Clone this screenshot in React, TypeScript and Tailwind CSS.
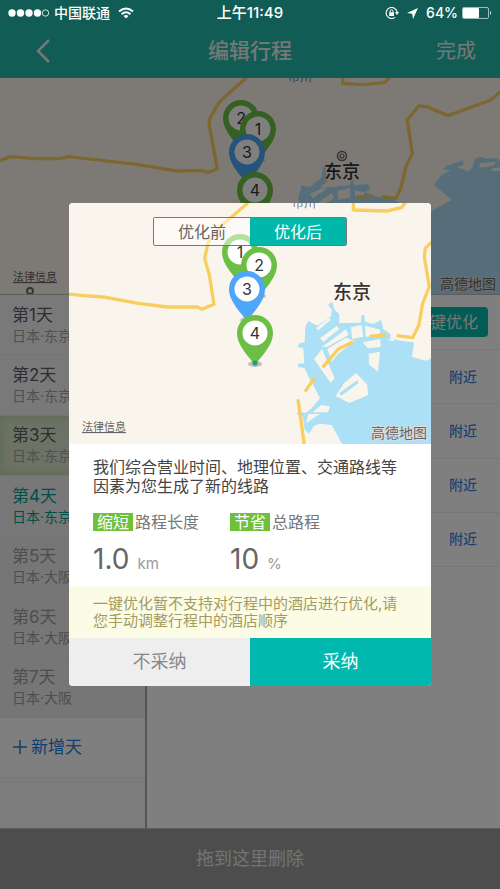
import React from "react";

type Tone = "normal" | "active" | "selected" | "muted";

const days: { name: string; place: string; tone: Tone }[] = [
  { name: "第1天", place: "日本·东京", tone: "normal" },
  { name: "第2天", place: "日本·东京", tone: "normal" },
  { name: "第3天", place: "日本·东京", tone: "active" },
  { name: "第4天", place: "日本·东京", tone: "selected" },
  { name: "第5天", place: "日本·大阪", tone: "muted" },
  { name: "第6天", place: "日本·大阪", tone: "muted" },
  { name: "第7天", place: "日本·大阪", tone: "muted" },
];

const rowTone: Record<Tone, string> = {
  normal: "bg-[#f3f3f3] text-[#5c5c5c]",
  active: "bg-[#d9e6cc] text-[#5c5c5c] shadow-[inset_0_0_12px_#b6d39a]",
  selected: "bg-[#f0f0f0] text-[#00a090]",
  muted: "bg-[#ececec] text-[#9c9c9c]",
};

const placeTone: Record<Tone, string> = {
  normal: "text-[#a0a0a0]",
  active: "text-[#a0a0a0]",
  selected: "text-[#00a090]",
  muted: "text-[#9c9c9c]",
};

function Pin({ x, y, n, color = "#6cbf45" }: { x: number; y: number; n: number; color?: string }) {
  return (
    <g transform={`translate(${x} ${y})`}>
      <ellipse cx="0" cy="31" rx="7" ry="3" fill="#8d8580" opacity="0.5" />
      <path d="M0 33 C-3 26 -18 14 -18 0 A18 18 0 0 1 18 0 C18 14 3 26 0 33Z" fill={color} />
      <circle r="12.5" fill="#fff" />
      <text y="6" textAnchor="middle" fontSize="16" fill="#333">
        {n}
      </text>
    </g>
  );
}

function MapBrand({ x, y }: { x: number; y: number }) {
  return (
    <text x={x} y={y} fontSize="14" fill="#666" stroke="#ddd" strokeWidth="2" paintOrder="stroke">
      高德地图
    </text>
  );
}

function TripMap() {
  return (
    <svg viewBox="0 0 500 216" preserveAspectRatio="xMidYMin slice" className="block h-[216px] w-full bg-[#faf5ec]">
      <g transform="translate(250 -8) scale(.3333)">
        <path
          fill="#abdcf2"
          d="M145 385 155 345 180 352 215 322 218 288 228 296 232 335 210 352 245 352 270 348 300 346 302 328 310 330 312 345 355 343 360 362 345 365 380 380 430 388 450 400 150 405ZM552 345 575 315 602 300 578 300 590 288 640 270 640 285 622 292 655 305 668 290 675 266 690 260 710 266 740 264 750 272V672H500V450L540 425 605 390Z"
        />
        <path
          fill="#faf5ec"
          d="M180 372 225 350 228 358 188 385ZM205 398 245 368 252 385 225 402ZM262 362 300 355 302 382 265 390ZM315 360 345 368 338 380 315 378ZM690 280 735 275 735 284 705 292 688 292ZM722 296 750 292V302L728 304Z"
        />
        <g fill="none" stroke="#f8cf61" strokeWidth="10" strokeLinejoin="round">
          <path d="M278 20V40L340 44 405 38 418 22" />
          <path d="M752 65 722 90 595 137 530 110 506 108 472 150 487 250 468 290 452 355 438 385 395 380M322 381 368 379" />
          <path d="M-750 272-720 260-645 266-570 266-545 260-340 283-220 303-145 301-128 308-98 297-123 160-120 145-93 97-10 22" />
        </g>
      </g>
      <g fill="none" stroke="#666">
        <circle cx="342" cy="78" r="4.5" strokeWidth="1.5" />
        <circle cx="342" cy="78" r="2" strokeWidth="1.2" />
        <circle cx="30" cy="213" r="3" strokeWidth="1.8" />
      </g>
      <text x="288" y="4" fontSize="12" fill="#777">市川</text>
      <text x="324" y="100" fontSize="18" fontWeight="500" fill="#333" stroke="#faf5ec" strokeWidth="2" paintOrder="stroke">东京</text>
      <Pin x={241} y={40} n={2} />
      <Pin x={258} y={51} n={1} />
      <Pin x={247} y={74} n={3} color="#4da6f5" />
      <Pin x={255} y={112} n={4} />
      <MapBrand x={440} y={211} />
      <text x="13" y="203" fontSize="11" fill="#666" textDecoration="underline">法律信息</text>
    </svg>
  );
}

function ResultMap() {
  return (
    <svg viewBox="0 0 362 241" preserveAspectRatio="xMidYMin slice" className="block h-[241px] w-full bg-[#faf5ec]">
      <g transform="translate(171 -8) scale(.3333)">
        <path
          fill="#abe0f6"
          d="M308 750 275 690 240 686 222 692 208 716 194 704 188 664 170 656 176 648 196 655 215 640 240 610 225 580 208 550 193 519 174 516V507L193 505 190 460 173 456 178 445 194 442 196 395 205 378 232 392 272 365 276 344 264 330 276 320 284 344 298 358 298 384 362 383 365 360 373 360 375 380 400 387 423 375 430 402 452 418 450 430 485 438 522 442 516 486 560 497 576 488V750Z"
        />
        <path
          fill="#faf5ec"
          d="M228 400 268 368 272 375 235 406ZM240 430 290 393 298 402 250 440ZM245 457 318 403 326 420 262 455ZM222 492 246 463 284 550 272 564ZM262 462 318 428 345 438 296 475 275 500ZM333 396 365 390 370 425 336 432ZM375 392 422 405 415 424 377 425ZM368 442 421 432 422 456 384 460ZM386 476 420 470 414 530 387 508ZM287 603 312 565 348 534 381 568 385 600 328 624ZM217 652 244 630 270 634 264 652ZM205 657 240 656 198 685ZM440 434 460 430 464 439Z"
        />
        <path d="M298 594 352 556 356 564 304 602Z" fill="#abe0f6" />
        <g fill="none" stroke="#f8ce60" strokeWidth="10" strokeLinejoin="round">
          <path d="M340 22V45L440 48 485 38 496 22" />
          <path d="M576 140 556 160 553 185 568 275 548 325 537 390 518 428 470 422M438 420 388 424M340 440 295 462 248 517M225 547 195 590M174 613 193 750" />
          <path d="M-515 297-470 302-410 306-305 325-218 336-128 336-114 343-78 328-92 240-106 190-95 140-60 95 24 24" />
        </g>
      </g>
      <text x="223" y="5" fontSize="12" fill="#777">市川</text>
      <text x="264" y="96" fontSize="19" fontWeight="500" fill="#333" stroke="#faf5ec" strokeWidth="2" paintOrder="stroke">东京</text>
      <Pin x={171} y={49} n={1} />
      <Pin x={190} y={62} n={2} />
      <Pin x={178} y={86} n={3} color="#4da6f8" />
      <Pin x={186} y={130} n={4} />
      <circle cx="186" cy="160" r="2.5" fill="#159c8c" />
      <MapBrand x={302} y={235} />
      <text x="13" y="228" fontSize="11" fill="#666" textDecoration="underline">法律信息</text>
    </svg>
  );
}

function StatusBar() {
  return (
    <div className="absolute inset-x-0 top-0 z-20 grid h-[26px] grid-cols-3 items-center px-2 text-sm font-medium text-white">
      <div className="flex items-center gap-1 whitespace-nowrap">
        <svg width="42" height="10" viewBox="0 0 42 10" fill="#fff">
          <circle cx="4" cy="5" r="3.7" />
          <circle cx="12.5" cy="5" r="3.7" />
          <circle cx="21" cy="5" r="3.7" />
          <circle cx="29.5" cy="5" r="3.7" />
          <circle cx="37.5" cy="5" r="3.2" fill="none" stroke="#fff" strokeWidth="0.8" />
        </svg>
        <span>中国联通</span>
        <svg className="ml-1" width="16" height="12" viewBox="0 0 16 12" fill="none" stroke="#fff" strokeWidth="2">
          <path d="M1 4.5Q8-1.5 15 4.5M3.5 7.2Q8 3.2 12.5 7.2" />
          <path d="M5.5 9Q8 7 10.5 9L8 11.5Z" fill="#fff" stroke="none" />
        </svg>
      </div>
      <div className="text-center text-[15px]">上午11:49</div>
      <div className="flex items-center justify-end gap-1">
        <svg width="14" height="12" viewBox="0 0 14 12" fill="none" stroke="#fff">
          <path d="M12.1 5A5.5 5.5 0 1 0 10 10.4" strokeWidth="1.1" />
          <path d="M10 5H14L12 8Z" fill="#fff" stroke="none" />
          <path d="M4.2 5.3H9V9H4.2Z" fill="#fff" stroke="none" />
          <path d="M5.2 5.5V4.2A1.4 1.4 0 0 1 8 4.2V5.5" />
        </svg>
        <svg className="mx-1" width="11" height="11" viewBox="0 0 11 11" fill="#fff">
          <path d="M11 0 6 11 5.2 5.8 0 5Z" />
        </svg>
        <span>64%</span>
        <svg width="30" height="12" viewBox="0 0 30 12">
          <rect x="0.5" y="0.5" width="26" height="11" rx="1.5" fill="none" stroke="#fff" strokeOpacity="0.6" />
          <rect x="1" y="1" width="16" height="10" rx="1" fill="#fff" />
          <path d="M28 4Q30 6 28 8Z" fill="#fff" />
        </svg>
      </div>
    </div>
  );
}

function Result({ tag, label, value, unit }: { tag: string; label: string; value: string; unit: string }) {
  return (
    <div className="w-[137px]">
      <div className="flex items-center gap-[2px] leading-[18px] text-[#777]">
        <span className="bg-[#6fc13c] px-1 text-white">{tag}</span>
        <span>{label}</span>
      </div>
      <div className="mt-[10px] flex items-baseline gap-2 leading-9">
        <span className="text-[28px] text-[#666]">{value}</span>
        <span className="text-[15px] text-[#999]">{unit}</span>
      </div>
    </div>
  );
}

export default function App() {
  return (
    <div className="relative flex min-h-screen flex-col bg-white font-['Inter','Noto_Sans_CJK_SC',sans-serif]">
      <StatusBar />
      <header className="grid h-[78px] grid-cols-3 items-center bg-[#22baac] px-6 pt-6 text-xl text-[#eee]">
        <button type="button" aria-label="返回" className="justify-self-start px-3">
          <svg width="14" height="24" viewBox="0 0 14 24" fill="none" stroke="#eee" strokeWidth="2.5">
            <path d="M13 1 2 12 13 23" />
          </svg>
        </button>
        <h1 className="text-center text-[21px] font-medium">编辑行程</h1>
        <button type="button" className="justify-self-end">完成</button>
      </header>

      <TripMap />

      <div className="flex flex-1 border-t border-[#bbb]">
        <aside className="w-[147px] border-r-2 border-[#aaa] bg-[#f9f9f9]">
          <ul className="grid h-[483px] auto-rows-fr">
            {days.map((d) => (
              <li key={d.name} className={`flex flex-col justify-center border-b border-[#e6e6e6] pl-3 ${rowTone[d.tone]}`}>
                <span className="text-[17px] leading-[22px]">{d.name}</span>
                <span className={`text-sm leading-5 ${placeTone[d.tone]}`}>{d.place}</span>
              </li>
            ))}
            <li className="flex border-b border-[#eee] bg-white">
              <button type="button" className="flex items-center gap-1 pl-3 text-[17px] text-[#1a7fe0]">
                <svg width="15" height="14" viewBox="0 0 15 14" fill="none" stroke="currentColor" strokeWidth="1.5">
                  <path d="M8 0V14M1 7H15" />
                </svg>
                <span>新增天</span>
              </button>
            </li>
          </ul>
        </aside>
        <main className="flex-1">
          <div className="flex h-[55px] items-center justify-end border-b border-[#eee] px-3">
            <button type="button" className="h-[30px] rounded-sm bg-[#00b8a9] px-[10px] text-base text-[#eee]">一键优化</button>
          </div>
          <ul className="grid h-[217px] grid-rows-4">
            {[1, 2, 3, 4].map((n) => (
              <li key={n} className="flex items-center justify-end border-b border-[#eee] px-[23px]">
                <a href="#nearby" className="text-sm font-medium text-[#3d85e0]">附近</a>
              </li>
            ))}
          </ul>
        </main>
      </div>

      <footer className="flex h-[61px] items-center justify-center border-t border-[#bbb] bg-[#9a9a9a] text-lg text-[#e6e6e6]">拖到这里删除</footer>

      <div className="absolute inset-0 z-10 flex items-center justify-center bg-black/50 px-[69px]">
        <section role="dialog" aria-modal="true" aria-label="优化后" className="w-full overflow-hidden rounded bg-white">
          <div className="relative">
            <ResultMap />
            <div className="absolute inset-x-0 top-[14px] flex justify-center">
              <div className="grid h-[29px] w-[194px] grid-cols-2 overflow-hidden rounded-xs border border-[#777] text-base">
                <button type="button" className="bg-white/50 text-[#666]">优化前</button>
                <button type="button" className="bg-[#00b8a9] text-white">优化后</button>
              </div>
            </div>
          </div>
          <div className="px-6 pt-[14px] pb-1">
            <p className="leading-[19px] text-[#444]">我们综合营业时间、地理位置、交通路线等因素为您生成了新的线路</p>
            <div className="mt-[17px] flex">
              <Result tag="缩短" label="路程长度" value="1.0" unit="km" />
              <Result tag="节省" label="总路程" value="10" unit="%" />
            </div>
          </div>
          <p className="bg-[#fbfbe6] px-6 py-[9px] text-[15px] leading-[17px] text-[#a39b62]">
            一键优化暂不支持对行程中的酒店进行优化,请您手动调整行程中的酒店顺序
          </p>
          <div className="grid h-12 grid-cols-2 text-lg">
            <button type="button" className="bg-[#eee] text-[#888]">不采纳</button>
            <button type="button" className="bg-[#00b8ad] text-white">采纳</button>
          </div>
        </section>
      </div>
    </div>
  );
}
